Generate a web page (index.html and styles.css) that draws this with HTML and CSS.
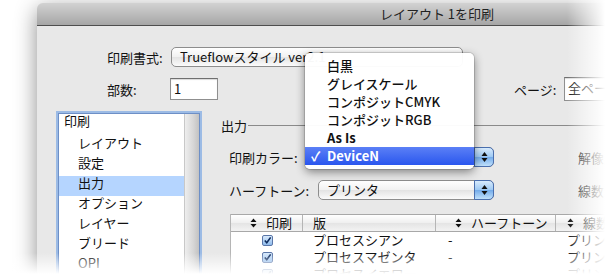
FILE: index.html
```html
<!DOCTYPE html>
<html lang="ja">
<head>
    <meta charset="UTF-8">
    <title>レイアウト 1を印刷</title>
    <link rel="stylesheet" href="styles.css">
</head>
<body>
    <div class="stage">
        <div class="window">
            <div class="titlebar">レイアウト 1を印刷</div>
            <div class="content">
                <div class="row row-style">
                    <span class="label">印刷書式:</span>
                    <div class="popup popup-style"><span class="popup-text">Trueflowスタイル ver2.1</span></div>
                </div>
                <div class="row row-copies">
                    <span class="label">部数:</span>
                    <div class="field field-copies">1</div>
                    <span class="label label-page">ページ:</span>
                    <div class="field field-page">全ページ</div>
                </div>
                <div class="main">
                    <div class="sidebar">
                        <div class="list">
                            <div class="item item-top">印刷</div>
                            <div class="item">レイアウト</div>
                            <div class="item">設定</div>
                            <div class="item selected">出力</div>
                            <div class="item">オプション</div>
                            <div class="item">レイヤー</div>
                            <div class="item">ブリード</div>
                            <div class="item">OPI</div>
                            <div class="item">詳細</div>
                        </div>
                        <div class="scrollbar"></div>
                    </div>
                    <div class="panel">
                        <div class="group-title"><span>出力</span><div class="rule"></div></div>
                        <div class="group">
                            <div class="prow prow-color">
                                <span class="plabel">印刷カラー:</span>
                                <div class="popup popup-wide">
                                    <span class="popup-text">DeviceN</span>
                                    <span class="arrows"><svg width="7" height="12" viewBox="0 0 7 12"><path d="M3.5 1 L6.5 5 L0.5 5 Z M3.5 11 L6.5 7 L0.5 7 Z" fill="#111"/></svg></span>
                                </div>
                                <span class="side-label">解像度:</span>
                            </div>
                            <div class="prow prow-halftone">
                                <span class="plabel">ハーフトーン:</span>
                                <div class="popup popup-wide">
                                    <span class="popup-text">プリンタ</span>
                                    <span class="arrows"><svg width="7" height="12" viewBox="0 0 7 12"><path d="M3.5 1 L6.5 5 L0.5 5 Z M3.5 11 L6.5 7 L0.5 7 Z" fill="#111"/></svg></span>
                                </div>
                                <span class="side-label">線数:</span>
                            </div>
                            <div class="table">
                                <div class="thead">
                                    <div class="th col-print"><svg class="sort" width="7" height="10" viewBox="0 0 7 10"><path d="M3.5 0.5 L6.5 4 L0.5 4 Z M3.5 9.5 L6.5 6 L0.5 6 Z" fill="#111"/></svg>印刷</div>
                                    <div class="th col-plate">版</div>
                                    <div class="th col-tone"><svg class="sort" width="7" height="10" viewBox="0 0 7 10"><path d="M3.5 0.5 L6.5 4 L0.5 4 Z M3.5 9.5 L6.5 6 L0.5 6 Z" fill="#111"/></svg>ハーフトーン</div>
                                    <div class="th col-lines"><svg class="sort" width="7" height="10" viewBox="0 0 7 10"><path d="M3.5 0.5 L6.5 4 L0.5 4 Z M3.5 9.5 L6.5 6 L0.5 6 Z" fill="#111"/></svg>線数</div>
                                </div>
                                <div class="tr">
                                    <div class="td col-print"><span class="check"><svg width="9" height="9" viewBox="0 0 10 10"><path d="M2 5 L4.2 7.5 L8.5 1.5" stroke="#0d2a5c" stroke-width="1.8" fill="none"/></svg></span></div>
                                    <div class="td col-plate">プロセスシアン</div>
                                    <div class="td col-tone">-</div>
                                    <div class="td col-lines">プリンタ</div>
                                </div>
                                <div class="tr">
                                    <div class="td col-print"><span class="check"><svg width="9" height="9" viewBox="0 0 10 10"><path d="M2 5 L4.2 7.5 L8.5 1.5" stroke="#0d2a5c" stroke-width="1.8" fill="none"/></svg></span></div>
                                    <div class="td col-plate">プロセスマゼンタ</div>
                                    <div class="td col-tone">-</div>
                                    <div class="td col-lines">プリンタ</div>
                                </div>
                                <div class="tr">
                                    <div class="td col-print"><span class="check"><svg width="9" height="9" viewBox="0 0 10 10"><path d="M2 5 L4.2 7.5 L8.5 1.5" stroke="#0d2a5c" stroke-width="1.8" fill="none"/></svg></span></div>
                                    <div class="td col-plate">プロセスイエロー</div>
                                    <div class="td col-tone">-</div>
                                    <div class="td col-lines">プリンタ</div>
                                </div>
                            </div>
                        </div>
                    </div>
                </div>
            </div>

            <div class="menu">
                <div class="mitem">白黒</div>
                <div class="mitem">グレイスケール</div>
                <div class="mitem">コンポジットCMYK</div>
                <div class="mitem">コンポジットRGB</div>
                <div class="mitem mbold">As Is</div>
                <div class="mitem mbold active"><span class="tick">✓</span>DeviceN</div>
            </div>
        </div>
    </div>
    <div class="fade fade-right"></div>
    <div class="fade fade-bottom"></div>
</body>
</html>
```

FILE: styles.css
```css
body {
    margin: 0;
    width: 607px;
    height: 275px;
    overflow: hidden;
    position: relative;
    background: #fff;
    font-family: "Noto Sans CJK JP", "Liberation Sans", sans-serif;
    font-size: 13px;
    color: #111;
}
.stage {
    padding: 3px 0 0 37px;
}
.window {
    position: relative;
    width: 800px;
    height: 330px;
    background: #e8e8e8;
    border-radius: 6px 6px 0 0;
    box-shadow: 0 6px 22px rgba(0,0,0,0.45);
}
.titlebar {
    height: 22px;
    line-height: 22px;
    text-align: center;
    color: #222;
    background: linear-gradient(#d2d2d2, #a6a6a6);
    border-bottom: 1px solid #4e4e4e;
    border-radius: 6px 6px 0 0;
}
.content {
    padding-top: 21px;
}
.row {
    display: flex;
    align-items: center;
    padding-left: 70px;
}
.label {
    width: 57px;
    margin-right: 6px;
}
.row-style {
    height: 20px;
}
.popup {
    position: relative;
    height: 18px;
    line-height: 18px;
    border: 1px solid #8d8d8d;
    border-radius: 5px;
    background: linear-gradient(#ffffff, #f1f1f1 50%, #e3e3e3 51%, #fbfbfb);
    box-sizing: content-box;
}
.popup-text {
    padding-left: 8px;
}
.popup-style {
    width: 290px;
    margin-left: 1px;
}
.row-copies {
    margin-top: 11px;
    height: 22px;
}
.field {
    height: 20px;
    line-height: 20px;
    border: 1px solid #8f8f8f;
    border-top-color: #6f6f6f;
    background: #fff;
    padding-left: 3px;
    box-shadow: inset 0 1px 1px rgba(0,0,0,0.15);
}
.field-copies {
    width: 43px;
}
.label-page {
    margin-left: 296px;
    width: 44px;
}
.field-page {
    height: 22px;
    width: 90px;
}
.main {
    display: flex;
    margin-top: 13px;
}
.sidebar {
    display: flex;
    margin-left: 21px;
    width: 140px;
    height: 200px;
    border: 1px solid #6d8fc6;
    box-shadow: 0 0 0 2px #9cbbe5;
    background: #fff;
}
.list {
    flex: 1;
}
.item {
    height: 20px;
    line-height: 14px;
    padding-left: 19px;
}
.item-top {
    padding-left: 5px;
    height: 22px;
}
.selected {
    background: #b5d5ff;
}
.scrollbar {
    width: 14px;
    border-left: 1px solid #c8c8c8;
    background: linear-gradient(to right, #eeeeee, #d6d6d6 60%, #c2c2c2);
}
.panel {
    flex: 1;
    margin-left: 21px;
    padding-top: 4px;
}
.group-title {
    display: flex;
    align-items: center;
    height: 16px;
}
.rule {
    flex: 1;
    height: 1px;
    background: #8a8a8a;
    margin-left: 1px;
}
.group {
    padding-left: 8px;
}
.prow {
    display: flex;
    align-items: center;
    height: 20px;
}
.prow-color {
    margin-top: 14px;
}
.prow-halftone {
    margin-top: 13px;
}
.plabel {
    width: 89px;
}
.popup-wide {
    width: 174px;
}
.arrows {
    position: absolute;
    top: -1px;
    right: -1px;
    width: 18px;
    height: 18px;
    display: flex;
    align-items: center;
    justify-content: center;
    border: 1px solid #4a6fae;
    border-radius: 0 5px 5px 0;
    background: linear-gradient(#d8ebfd, #9cc8f3 50%, #73abea 51%, #bfe0fb);
}
.side-label {
    margin-left: 84px;
}
.table {
    margin-top: 14px;
    margin-left: 1px;
    width: 420px;
    border-left: 1px solid #b5b5b5;
    background: #fff;
}
.thead {
    display: flex;
    height: 16px;
    line-height: 16px;
    border-top: 1px solid #a8a8a8;
    border-bottom: 1px solid #a8a8a8;
    background: linear-gradient(#ffffff, #efefef 50%, #e4e4e4 51%, #f3f3f3);
}
.th {
    display: flex;
    align-items: center;
    border-right: 1px solid #b5b5b5;
    box-sizing: border-box;
}
.sort {
    margin-right: 9px;
}
.col-print {
    width: 72px;
}
.col-plate {
    width: 133px;
}
.col-tone {
    width: 120px;
}
.col-lines {
    width: 95px;
}
.thead .col-print {
    padding-left: 19px;
}
.thead .col-plate {
    padding-left: 10px;
}
.thead .col-tone {
    padding-left: 19px;
}
.thead .col-lines {
    padding-left: 11px;
}
.tr {
    display: flex;
    height: 17px;
    line-height: 16px;
}
.td {
    box-sizing: border-box;
}
.tr .col-print {
    display: flex;
    align-items: center;
    padding-left: 31px;
    padding-bottom: 1px;
}
.tr .col-plate {
    padding-left: 10px;
}
.tr .col-tone {
    padding-left: 12px;
}
.tr .col-lines {
    padding-left: 11px;
}
.check {
    display: flex;
    width: 9px;
    height: 9px;
    border: 1px solid #5a76a8;
    border-radius: 2px;
    background: linear-gradient(#d9eafc, #8fbbec);
}
.menu {
    position: absolute;
    left: 268px;
    top: 50px;
    width: 169px;
    padding: 4px 0;
    background: rgba(255,255,255,0.97);
    border-radius: 5px;
    box-shadow: 0 3px 10px rgba(0,0,0,0.45), 0 0 0 1px rgba(0,0,0,0.12);
}
.mitem {
    position: relative;
    height: 18px;
    line-height: 18px;
    padding-left: 22px;
    font-size: 13px;
    font-weight: 500;
}
.mbold {
    font-weight: 700;
}
.active {
    color: #fff;
    background: linear-gradient(#5b80f6, #2a56ee);
}
.tick {
    position: absolute;
    left: 6px;
    top: 0;
}
.fade {
    position: absolute;
    pointer-events: none;
}
.fade-right {
    top: 0;
    right: 0;
    width: 40px;
    height: 275px;
    background: linear-gradient(to right, rgba(255,255,255,0), #fff 95%);
}
.fade-bottom {
    left: 0;
    bottom: 0;
    width: 607px;
    height: 22px;
    background: linear-gradient(rgba(255,255,255,0), #fff 95%);
}
```
